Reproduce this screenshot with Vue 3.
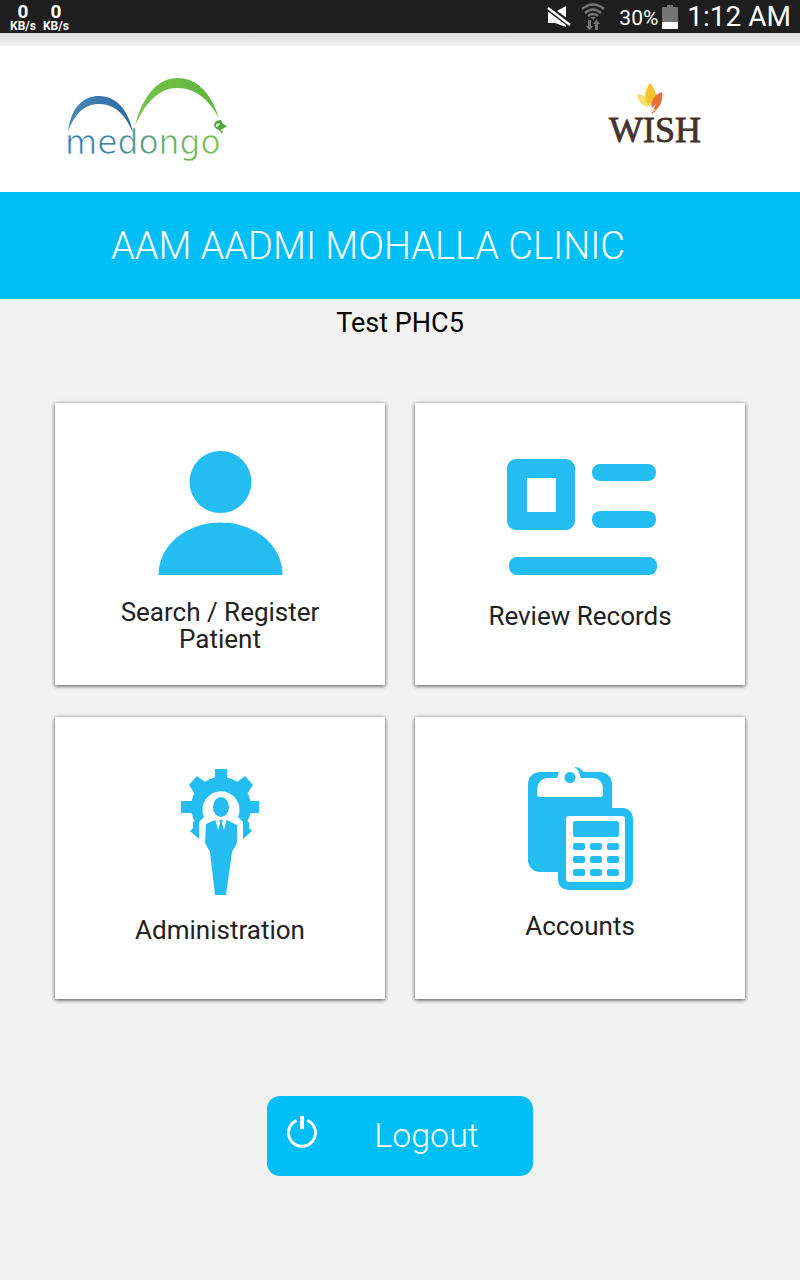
<template>
  <div class="screen">
    <div class="status-bar">
      <div class="speeds">
        <div v-for="(speed, index) in speeds" :key="index" class="speed">
          <span class="speed-value">{{ speed }}</span>
          <span class="speed-unit">KB/s</span>
        </div>
      </div>
      <div class="status-right">
        <svg class="mute" width="24" height="24" viewBox="0 0 24 24">
          <path d="M1 7h7l11-6v21L8 18H1z" fill="#fff" />
          <path d="M0 2l24 18" stroke="#1e1e1e" stroke-width="6" />
          <path d="M1 3l22 17" stroke="#fff" stroke-width="2.4" />
        </svg>
        <svg class="wifi" width="24" height="28" viewBox="0 0 24 28">
          <path d="M1 6q11-9 22 0M4 10q8-7 16 0M7 13q5-4 10 0" fill="none" stroke="#757575" stroke-width="2.4" />
          <path d="M9 14h6l-3 3z" fill="#757575" />
          <path d="M7 17h3v6h2l-3.500 4.500L5 23h2zM14 27h3v-6h2l-3.500-4.500L12 21h2z" fill="#757575" />
        </svg>
        <span class="percent">30%</span>
        <svg class="battery" width="16" height="24" viewBox="0 0 16 24">
          <path d="M5 0h6v2h5v15H0V2h5z" fill="#757575" />
          <path d="M0 17h16v7H0z" fill="#fff" />
        </svg>
        <span class="time">1:12 AM</span>
      </div>
    </div>
    <div class="shade"></div>

    <header class="header">
      <svg class="medongo" width="164" height="90" viewBox="0 0 164 90" role="img" aria-label="medongo">
        <defs>
          <linearGradient id="blueArc" x1="0" y1="0" x2="1" y2="0">
            <stop offset="0" stop-color="#4789b8" />
            <stop offset="1" stop-color="#2c68a0" />
          </linearGradient>
          <linearGradient id="greenArc" x1="0" y1="0" x2="1" y2="0">
            <stop offset="0" stop-color="#79c24a" />
            <stop offset="1" stop-color="#5db63d" />
          </linearGradient>
          <linearGradient id="wordmark" gradientUnits="userSpaceOnUse" x1="2" y1="0" x2="158" y2="0">
            <stop offset="0" stop-color="#3b7bad" />
            <stop offset="0.3" stop-color="#4385a5" />
            <stop offset="0.65" stop-color="#65ad68" />
            <stop offset="1" stop-color="#79c440" />
          </linearGradient>
        </defs>
        <text x="-1" y="80" class="wordmark" fill="url(#wordmark)">medongo</text>
        <path d="M2 58C5 31 19 22 33 22c18 0 30 15 34 37-7-17-17-29-34-29C20 30 9 38 2 58z" fill="url(#blueArc)" />
        <path d="M69 52C77 20 93 4 111 4c20 0 34 15 42 40-10-18-23-30-42-30-17 0-31 13-42 38z" fill="url(#greenArc)" />
        <path d="M148 51q1-5 7-5l2 4 4 2-4 3-1 5-3-4q-4-1-5-5z" fill="#54a43c" />
        <path d="M150 50l4-1-1 3-3 1zM154 56l4-2-2 3z" fill="#e0f2d9" />
      </svg>
      <svg class="wish" width="98" height="74" viewBox="0 0 98 74" role="img" aria-label="WISH">
        <path d="M42 26C33 24 30 18 29 12c8 1 14 5 13 14z" fill="#f8df6c" />
        <path d="M43 26C35 17 36 9 42 1c7 8 8 16 4 25z" fill="#f5c52d" />
        <path d="M44 32c-2-10 0-19 10-22 1 9-1 14-10 22z" fill="#e5703b" />
        <path d="M40 26l2-5 2 5 4-4-3 6 3-1-5 4z" fill="#fff" />
        <text x="1" y="60" class="wish-name">WISH</text>
      </svg>
    </header>

    <div class="banner">
      <h1>AAM AADMI MOHALLA CLINIC</h1>
    </div>

    <main class="content">
      <h2 class="clinic-name">Test PHC5</h2>

      <div class="menu">
        <button v-for="item in menuItems" :key="item.id" class="card" type="button">
          <svg v-if="item.id === 'patient'" class="card-icon" viewBox="85 40 160 156">
            <circle cx="165.500" cy="79" r="31" />
            <path d="M103.500 172c0-30 28-52.500 62-52.500s62 22.500 62 52.500z" />
          </svg>
          <svg v-else-if="item.id === 'records'" class="card-icon tall" viewBox="85 40 160 160">
            <path fill-rule="evenodd" d="M101 56h50a9 9 0 0 1 9 9v53a9 9 0 0 1-9 9h-50a9 9 0 0 1-9-9V65a9 9 0 0 1 9-9zM112 75v34h29V75z" />
            <rect x="177" y="61" width="64" height="17" rx="8" />
            <rect x="177" y="108" width="64" height="17" rx="8" />
            <rect x="94" y="154" width="148" height="18" rx="8" />
          </svg>
          <svg v-else-if="item.id === 'admin'" class="card-icon tall" viewBox="85 40 160 160">
            <circle cx="166" cy="90" r="30" />
            <path d="M160 52h12v12h-12zM126 84h12v12h-12zM192 84h12v12h-12zM134 68l8-9 12 9-12 12zM198 68l-8-9-12 9 12 12z" />
            <path d="M144 165V105l5-5a18.500 18.500 0 1 1 34 0l5 5v60z" fill="#fff" />
            <path d="M138 105l6-3v20l-9-8 3-3zM194 105l-6-3v20l9-8-3-3z" />
            <ellipse cx="166" cy="90" rx="8" ry="10" />
            <path d="M151 107l9-4 6 3 6-3 10 5v18l-5 9-6 43h-11l-5-43-5-9z" />
            <path d="M160 101l6 3 6-3-3 12-3-9-3 9z" fill="#fff" />
            <path d="M164 103h4l-1 3 1 5-2 3-2-3 1-5z" />
          </svg>
          <svg v-else class="card-icon" viewBox="85 40 160 156">
            <rect x="113" y="55" width="84" height="100" rx="12" />
            <path d="M142 61l3-9h16q5 4 5 12z" fill="#fff" />
            <path d="M122 77v-4q1-12 12-12h43q11 0 11 12v4q0 3-3 3h-60q-3 0-3-3z" fill="#fff" />
            <circle cx="155" cy="60.500" r="5.500" />
            <path d="M159 50q9 0 11 9l-4 2q-1-8-7-11z" />
            <rect x="143" y="91" width="75" height="82" rx="10" />
            <rect x="151" y="99" width="59" height="66" rx="3" fill="#fff" />
            <rect x="158" y="104" width="46" height="16" rx="2" />
            <template v-for="row in 3" :key="row">
              <rect v-for="col in 3" :key="col" :x="141 + col * 17" :y="113 + row * 13" width="12" height="7" rx="2" />
            </template>
          </svg>
          <span class="card-label">{{ item.label }}</span>
        </button>
      </div>

      <button class="logout" type="button">
        <svg width="30" height="38" viewBox="0 0 30 38">
          <path d="M9.500 4.500a13.500 13.500 0 1 0 11 0" fill="none" stroke="#fff" stroke-width="3" />
          <path d="M15 0v13" stroke="#fff" stroke-width="4" />
        </svg>
        <span>Logout</span>
      </button>
    </main>
  </div>
</template>

<script setup>
import { ref } from 'vue';

const speeds = ref([0, 0]);

const menuItems = ref([
  { id: 'patient', label: 'Search / Register Patient' },
  { id: 'records', label: 'Review Records' },
  { id: 'admin', label: 'Administration' },
  { id: 'accounts', label: 'Accounts' },
]);
</script>

<style>
body {
  margin: 0;
  background: #f2f2f2;
}
</style>

<style scoped>
.screen {
  min-height: 100vh;
  background: #f2f2f2;
  font-family: Roboto, "Liberation Sans", sans-serif;
}
.status-bar {
  display: flex;
  justify-content: space-between;
  height: 33px;
  padding: 0 9px 0 10px;
  background: #1e1e1e;
  color: #fff;
}
.speeds {
  display: flex;
  gap: 7px;
}
.speed {
  display: flex;
  flex-direction: column;
  align-items: center;
  padding-top: 4px;
  font-weight: 700;
}
.speed-value {
  font-size: 19px;
  line-height: 16px;
}
.speed-unit {
  font-size: 12px;
  line-height: 12px;
}
.status-right {
  display: flex;
  align-items: center;
}
.wifi {
  margin: 0 14px 0 10px;
}
.percent {
  font-size: 21px;
  padding-top: 3px;
}
.battery {
  margin: 0 9px 0 4px;
}
.time {
  font-size: 28px;
}
.shade {
  height: 13px;
  background: linear-gradient(#dcdcdc, #f2f2f2);
}
.header {
  display: flex;
  align-items: center;
  justify-content: space-between;
  height: 146px;
  padding: 0 94px 0 66px;
  background: #fff;
}
.medongo {
  overflow: visible;
}
.wordmark {
  font-family: "DejaVu Sans", sans-serif;
  font-size: 33px;
  font-weight: 400;
  stroke: #fff;
  stroke-width: 0.7px;
}
.wish-name {
  font-family: "Liberation Serif", serif;
  font-size: 36px;
  fill: #43332f;
  stroke: #43332f;
  stroke-width: 0.8px;
}
.banner {
  display: flex;
  align-items: center;
  justify-content: center;
  height: 107px;
  padding-right: 64px;
  background: #00bff7;
}
.banner h1 {
  margin: 0;
  color: #fff;
  font-size: 38px;
  font-weight: 300;
}
.content {
  display: flex;
  flex-direction: column;
  align-items: center;
  padding: 8px 55px 40px;
}
.clinic-name {
  margin: 0;
  color: #000;
  font-size: 27px;
  font-weight: 400;
  line-height: 32px;
}
.menu {
  display: grid;
  grid-template-columns: 1fr 1fr;
  gap: 32px 30px;
  width: 100%;
  margin-top: 64px;
}
.card {
  display: flex;
  flex-direction: column;
  align-items: center;
  justify-content: flex-start;
  min-height: 282px;
  padding: 40px 50px 20px;
  border: 0;
  background: #fff;
  box-shadow: 0 1px 4px rgba(0, 0, 0, 0.7);
  font-family: inherit;
}
.card-icon {
  flex: none;
  width: 160px;
  height: 156px;
  fill: #23bdf1;
}
.card-icon.tall {
  height: 160px;
}
.card-label {
  color: #212121;
  font-size: 26px;
  line-height: 27px;
}
.logout {
  display: flex;
  align-items: center;
  gap: 23px;
  width: 266px;
  height: 80px;
  margin-top: 97px;
  padding: 0 20px 3px;
  border: 0;
  border-radius: 13px;
  background: #00bff7;
  color: #fff;
  font-family: inherit;
  font-size: 34px;
  font-weight: 300;
}
.logout span {
  flex: 1;
}
</style>
